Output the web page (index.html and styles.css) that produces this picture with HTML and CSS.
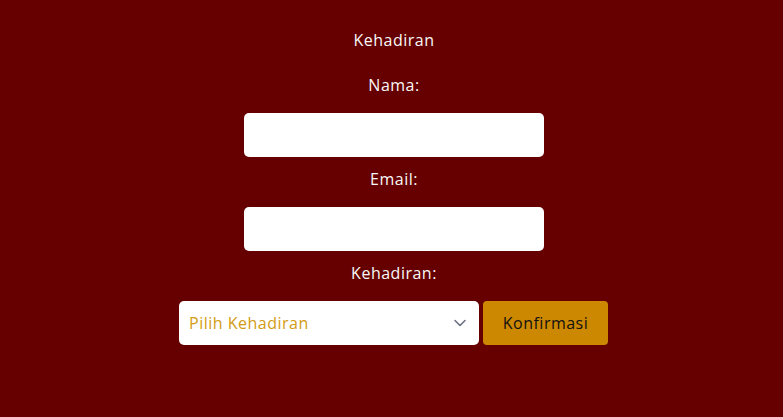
FILE: index.html
```html
<!DOCTYPE html>
<html lang="id">
<head>
<meta charset="utf-8">
<link rel="stylesheet" href="styles.css">
</head>
<body>
<form class="form">
  <div class="title">Kehadiran</div>
  <label class="label label-first" for="nama">Nama:</label>
  <input class="field" id="nama" type="text">
  <label class="label" for="email">Email:</label>
  <input class="field" id="email" type="email">
  <label class="label" for="hadir">Kehadiran:</label>
  <div class="row">
    <div class="select-wrap">
      <select class="select" id="hadir">
        <option>Pilih Kehadiran</option>
      </select>
      <svg class="chev" width="14" height="10" viewBox="0 0 14 10"><path d="M2 2.5 L7 7.5 L12 2.5" fill="none" stroke="#6b7280" stroke-width="1.6" stroke-linecap="round" stroke-linejoin="round"/></svg>
    </div>
    <button class="btn" type="button">Konfirmasi</button>
  </div>
</form>
</body>
</html>
```

FILE: styles.css
```css
html, body {
  margin: 0;
  padding: 0;
  background: #660000;
  height: 100%;
}
body {
  font-family: "Open Sans", "Noto Sans", sans-serif;
  font-size: 16px;
  letter-spacing: 0.5px;
  color: #f8f8f8;
}
.form {
  display: flex;
  flex-direction: column;
  align-items: center;
  padding: 29px 0 0 5px;
}
.title {
  line-height: 22px;
  height: 22px;
}
.label {
  display: block;
  line-height: 22px;
  height: 22px;
  margin-top: 11px;
  margin-bottom: 17px;
}
.label-first {
  margin-top: 23px;
}
.field {
  box-sizing: border-box;
  width: 300px;
  height: 44px;
  border: none;
  border-radius: 5px;
  background: #ffffff;
  margin: 0;
  padding: 0 10px;
  font: inherit;
}
.row {
  display: flex;
  gap: 4px;
  margin-left: -1px;
}
.select-wrap {
  position: relative;
  width: 300px;
  height: 44px;
}
.select {
  appearance: none;
  -webkit-appearance: none;
  box-sizing: border-box;
  width: 100%;
  height: 100%;
  border: none;
  border-radius: 5px;
  background: #ffffff;
  color: #d39b12;
  font: inherit;
  letter-spacing: 0.5px;
  padding: 0 10px;
  margin: 0;
}
.chev {
  position: absolute;
  right: 12px;
  top: 17px;
  pointer-events: none;
}
.btn {
  box-sizing: border-box;
  width: 125px;
  height: 44px;
  border: none;
  border-radius: 4px;
  background: #cc8800;
  color: #111111;
  font: inherit;
  letter-spacing: 0.5px;
  padding: 0;
  margin: 0;
}
```
